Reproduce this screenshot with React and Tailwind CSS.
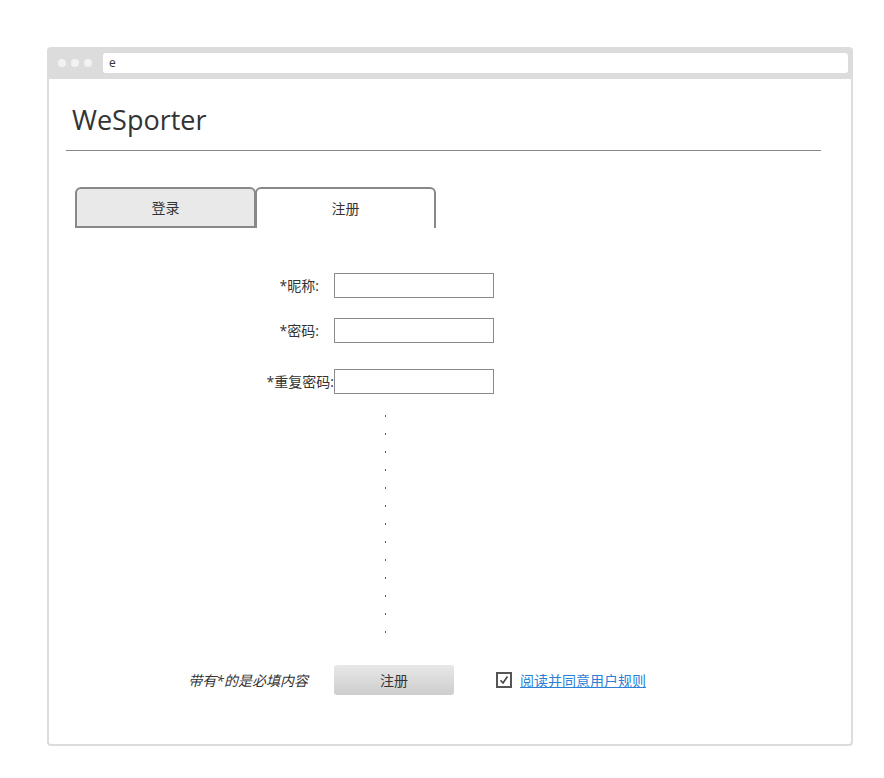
export default function App() {
  const dots = Array.from({ length: 13 });
  const font = { fontFamily: '"Open Sans", "Noto Sans CJK SC", sans-serif' };
  return (
    <div className="w-[884px] h-[778px] bg-white pt-[47px] pl-[47px]" style={font}>
      <div className="w-[806px] h-[699px] border-2 border-[#dcdcdc] rounded-[4px] flex flex-col">
        {/* browser top bar */}
        <div className="h-[30px] bg-[#dcdcdc] flex items-center pl-[9px] pr-[3px] pb-[2px]">
          <div className="flex gap-[5px]">
            <div className="w-[8px] h-[8px] rounded-full bg-[#f2f2f2]" />
            <div className="w-[8px] h-[8px] rounded-full bg-[#f2f2f2]" />
            <div className="w-[8px] h-[8px] rounded-full bg-[#f2f2f2]" />
          </div>
          <div className="ml-[11px] flex-1 h-[20px] bg-white rounded-[3px] flex items-center pl-[6px] text-[12px] text-[#333]">
            e
          </div>
        </div>
        {/* content */}
        <div className="flex-1 flex flex-col">
          <div className="pl-[23px] pt-[21px] h-[71px] text-[27px] leading-[40px] text-[#333]">WeSporter</div>
          <div className="ml-[17px] w-[755px] h-px bg-[#888]" />
          {/* tabs */}
          <div className="mt-[36px] ml-[26px] flex h-[41px]">
            <div className="w-[181px] h-[41px] bg-[#e9e9e9] border-2 border-[#888] rounded-t-[6px] flex items-center justify-center text-[14px] text-[#333]">
              登录
            </div>
            <div className="w-[181px] -ml-[1px] h-[41px] bg-white border-2 border-b-0 border-[#888] rounded-t-[6px] flex items-center justify-center text-[14px] text-[#333]">
              注册
            </div>
          </div>
          {/* form */}
          <div className="mt-[45px] flex flex-col">
            <div className="flex items-center h-[25px]">
              <div className="w-[270px] text-right text-[14px] text-[#333]">*昵称:</div>
              <div className="ml-[15px] w-[160px] h-[25px] border border-[#8a8a8a] bg-white" />
            </div>
            <div className="flex items-center h-[25px] mt-[20px]">
              <div className="w-[270px] text-right text-[14px] text-[#333]">*密码:</div>
              <div className="ml-[15px] w-[160px] h-[25px] border border-[#8a8a8a] bg-white" />
            </div>
            <div className="flex items-center h-[25px] mt-[26px]">
              <div className="w-[285px] text-right text-[14px] text-[#333]">*重复密码:</div>
              <div className="w-[160px] h-[25px] border border-[#8a8a8a] bg-white" />
            </div>
          </div>
          {/* dots */}
          <div className="mt-[21px] ml-[336px] flex flex-col gap-[16px]">
            {dots.map((_, i) => (
              <div key={i} className="w-px h-[2px] bg-[#555]" />
            ))}
          </div>
          {/* bottom row */}
          <div className="mt-[32px] flex items-center h-[30px]">
            <div className="w-[270px] text-right pr-[11px] text-[14px] italic text-[#333]">带有*的是必填内容</div>
            <button className="ml-[15px] w-[120px] h-[30px] rounded-[3px] bg-gradient-to-b from-[#e8e8e8] to-[#cdcdcd] text-[14px] text-[#333]">
              注册
            </button>
            <div className="ml-[42px] w-[16px] h-[16px] border-2 border-[#555] flex items-center justify-center bg-white">
              <svg width="10" height="10" viewBox="0 0 10 10">
                <path d="M1.5 5.2 L4 8 L8.5 1.5" fill="none" stroke="#444" strokeWidth="1.6" />
              </svg>
            </div>
            <a href="#" className="ml-[8px] text-[14px] text-[#2b7fd6] underline">阅读并同意用户规则</a>
          </div>
        </div>
      </div>
    </div>
  );
}
